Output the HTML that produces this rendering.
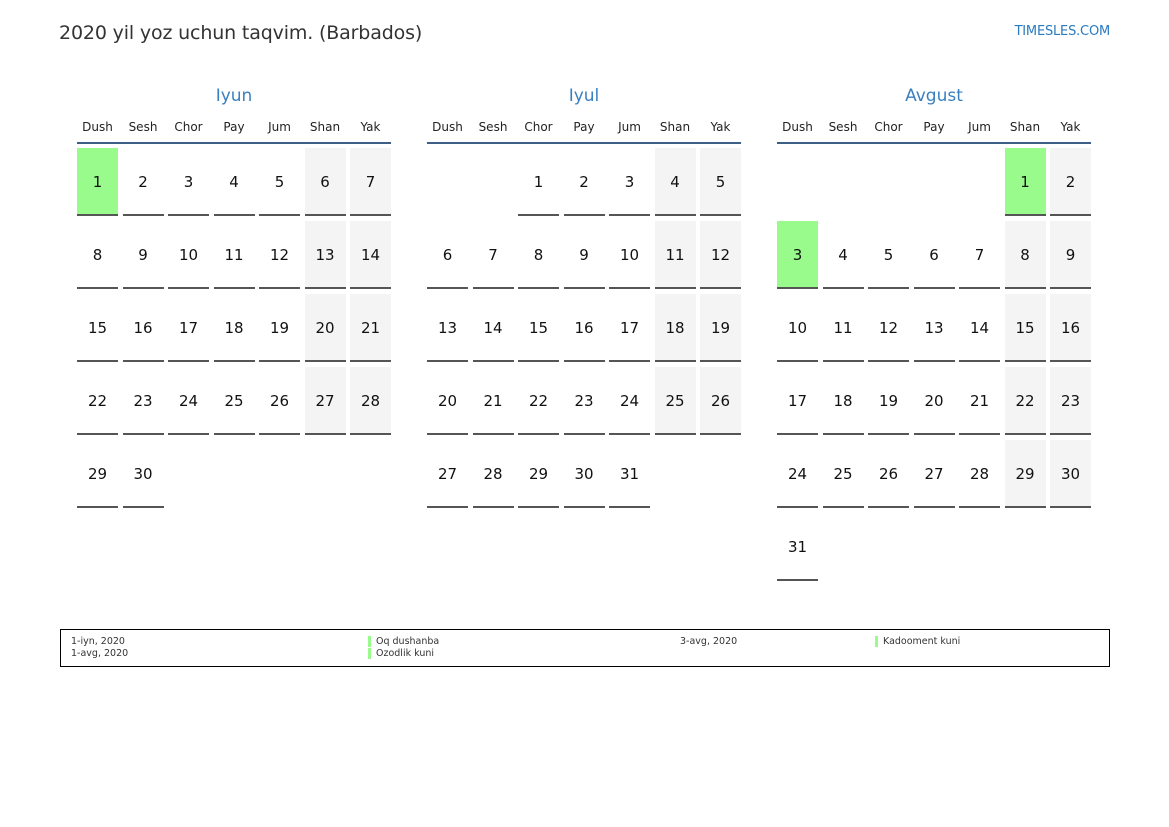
<!DOCTYPE html><html><head><meta charset="utf-8"><style>
body{margin:0;width:1169px;height:827px;background:#fff;font-family:"DejaVu Sans","Liberation Sans",sans-serif;position:relative;overflow:hidden}
.t{position:absolute;left:59px;top:22px;font-size:19px;letter-spacing:-0.15px;color:#333}
.s{position:absolute;right:59px;top:24px;font-size:13px;color:#2a7ac0;letter-spacing:-0.2px}
.m{position:absolute;top:85px;width:314px}
.mt{text-align:center;font-size:17px;color:#3a80c0;height:35px;line-height:22px}
.h{display:grid;grid-template-columns:repeat(7,41px);column-gap:4.5px;font-size:12px;color:#222;text-align:center;height:22px;border-bottom:2px solid #3e5f85}
.g{display:grid;grid-template-columns:repeat(7,41px);column-gap:4.5px;row-gap:5px;grid-auto-rows:68px;margin-top:4px}
.g div{font-size:15px;color:#111;text-align:center;line-height:68px}
.g .d{border-bottom:2px solid #555;box-sizing:border-box}
.g .w{background:#f4f4f4}
.g .x{background:#98fb8b}
.lg{position:absolute;left:60px;top:629px;width:1048px;height:36px;border:1px solid #000;font-size:9.5px;color:#333}
.lg span{position:absolute;line-height:12px}
.b{border-left:3px solid #98fb8b;padding-left:5px;height:11px}
</style></head><body>
<div class="t">2020 yil yoz uchun taqvim. (Barbados)</div>
<div class="s">TIMESLES.COM</div>

<div class="m" style="left:77px"><div class="mt">Iyun</div>
<div class="h"><span>Dush</span><span>Sesh</span><span>Chor</span><span>Pay</span><span>Jum</span><span>Shan</span><span>Yak</span></div>
<div class="g">
<div class="d x">1</div><div class="d">2</div><div class="d">3</div><div class="d">4</div><div class="d">5</div><div class="d w">6</div><div class="d w">7</div>
<div class="d">8</div><div class="d">9</div><div class="d">10</div><div class="d">11</div><div class="d">12</div><div class="d w">13</div><div class="d w">14</div>
<div class="d">15</div><div class="d">16</div><div class="d">17</div><div class="d">18</div><div class="d">19</div><div class="d w">20</div><div class="d w">21</div>
<div class="d">22</div><div class="d">23</div><div class="d">24</div><div class="d">25</div><div class="d">26</div><div class="d w">27</div><div class="d w">28</div>
<div class="d">29</div><div class="d">30</div>
</div></div>

<div class="m" style="left:427px"><div class="mt">Iyul</div>
<div class="h"><span>Dush</span><span>Sesh</span><span>Chor</span><span>Pay</span><span>Jum</span><span>Shan</span><span>Yak</span></div>
<div class="g">
<div></div><div></div><div class="d">1</div><div class="d">2</div><div class="d">3</div><div class="d w">4</div><div class="d w">5</div>
<div class="d">6</div><div class="d">7</div><div class="d">8</div><div class="d">9</div><div class="d">10</div><div class="d w">11</div><div class="d w">12</div>
<div class="d">13</div><div class="d">14</div><div class="d">15</div><div class="d">16</div><div class="d">17</div><div class="d w">18</div><div class="d w">19</div>
<div class="d">20</div><div class="d">21</div><div class="d">22</div><div class="d">23</div><div class="d">24</div><div class="d w">25</div><div class="d w">26</div>
<div class="d">27</div><div class="d">28</div><div class="d">29</div><div class="d">30</div><div class="d">31</div>
</div></div>

<div class="m" style="left:777px"><div class="mt">Avgust</div>
<div class="h"><span>Dush</span><span>Sesh</span><span>Chor</span><span>Pay</span><span>Jum</span><span>Shan</span><span>Yak</span></div>
<div class="g">
<div></div><div></div><div></div><div></div><div></div><div class="d x">1</div><div class="d w">2</div>
<div class="d x">3</div><div class="d">4</div><div class="d">5</div><div class="d">6</div><div class="d">7</div><div class="d w">8</div><div class="d w">9</div>
<div class="d">10</div><div class="d">11</div><div class="d">12</div><div class="d">13</div><div class="d">14</div><div class="d w">15</div><div class="d w">16</div>
<div class="d">17</div><div class="d">18</div><div class="d">19</div><div class="d">20</div><div class="d">21</div><div class="d w">22</div><div class="d w">23</div>
<div class="d">24</div><div class="d">25</div><div class="d">26</div><div class="d">27</div><div class="d">28</div><div class="d w">29</div><div class="d w">30</div>
<div class="d">31</div>
</div></div>

<div class="lg">
<span style="left:10px;top:6px">1-iyn, 2020</span>
<span style="left:10px;top:18px">1-avg, 2020</span>
<span class="b" style="left:307px;top:6px">Oq dushanba</span>
<span class="b" style="left:307px;top:18px">Ozodlik kuni</span>
<span style="left:619px;top:6px">3-avg, 2020</span>
<span class="b" style="left:814px;top:6px">Kadooment kuni</span>
</div>
</body></html>
